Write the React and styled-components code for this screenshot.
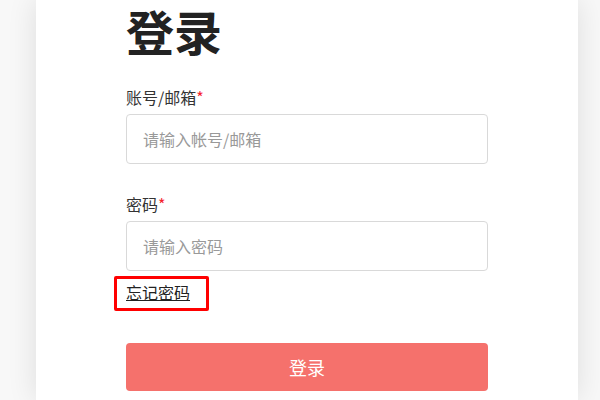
import React from 'react';
import styled, { createGlobalStyle } from 'styled-components';

const GlobalStyle = createGlobalStyle`
  html, body {
    margin: 0;
    padding: 0;
    background: #f8f8f8;
    overflow: hidden;
  }
  body {
    font-family: "Noto Sans CJK SC", "Noto Sans", sans-serif;
  }
`;

const Card = styled.div`
  margin-left: 36px;
  width: 542px;
  height: 400px;
  background: #fff;
  box-shadow: 0 0 28px rgba(0, 0, 0, 0.11);
  box-sizing: border-box;
  padding-left: 90px;
`;

const Form = styled.form`
  width: 362px;
  display: flex;
  flex-direction: column;
`;

const Title = styled.h1`
  margin: 0 0 25px;
  font-size: 48px;
  line-height: 60px;
  font-weight: 700;
  color: #222;
`;

const Label = styled.label`
  font-size: 16px;
  line-height: 24px;
  color: #333;
  margin-bottom: 5px;
`;

const Required = styled.span`
  color: #f5222d;
`;

const Input = styled.input`
  box-sizing: border-box;
  width: 100%;
  height: 50px;
  padding: 0 16px;
  border: 1px solid #d9d9d9;
  border-radius: 4px;
  font-family: inherit;
  font-size: 16px;
  color: #333;
  outline: none;
  margin-bottom: ${(p) => p.$gap}px;

  &::placeholder {
    color: #999;
  }
`;

const ForgotLink = styled.a`
  position: relative;
  align-self: flex-start;
  font-size: 16px;
  line-height: 24px;
  color: #222;
  text-decoration: underline;
  margin-top: 9px;
  margin-bottom: 39px;

  &::after {
    content: '';
    position: absolute;
    left: -12px;
    right: -19px;
    top: -4px;
    bottom: -7px;
    border: 3px solid #ff0000;
    border-radius: 2px;
  }
`;

const SubmitButton = styled.button`
  height: 48px;
  width: 100%;
  border: none;
  border-radius: 4px;
  background: #f5716c;
  color: #fff;
  font-family: inherit;
  font-size: 18px;
  cursor: pointer;
`;

const App = () => {
  return (
    <>
      <GlobalStyle />
      <Card>
        <Form onSubmit={(e) => e.preventDefault()}>
          <Title>登录</Title>
          <Label>
            账号/邮箱<Required>*</Required>
          </Label>
          <Input placeholder="请输入帐号/邮箱" $gap={28} />
          <Label>
            密码<Required>*</Required>
          </Label>
          <Input type="password" placeholder="请输入密码" $gap={0} />
          <ForgotLink href="#">忘记密码</ForgotLink>
          <SubmitButton type="submit">登录</SubmitButton>
        </Form>
      </Card>
    </>
  );
};

export default App;
